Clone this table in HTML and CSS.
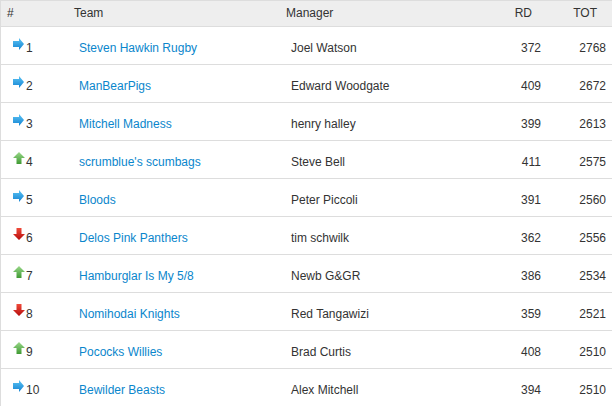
FILE: index.html
```html
<!DOCTYPE html>
<html>
<head>
<meta charset="utf-8">
<link rel="stylesheet" href="styles.css">
</head>
<body>
<svg width="0" height="0" class="defs">
  <defs>
    <linearGradient id="gb" x1="0" y1="0" x2="0" y2="1"><stop offset="0" stop-color="#5cc4f4"/><stop offset="1" stop-color="#1382d2"/></linearGradient>
    <linearGradient id="gg" x1="0" y1="0" x2="0" y2="1"><stop offset="0" stop-color="#9ad88a"/><stop offset="1" stop-color="#3f9a33"/></linearGradient>
    <linearGradient id="gr" x1="0" y1="0" x2="0" y2="1"><stop offset="0" stop-color="#f04a3a"/><stop offset="1" stop-color="#b50d0d"/></linearGradient>
    <symbol id="same" viewBox="0 0 11 12"><polygon points="0,3 6,3 6,0 11,6 6,12 6,9 0,9" fill="url(#gb)"/></symbol>
    <symbol id="up" viewBox="0 0 12 12"><polygon points="6,0 12,6 8.5,6 8.5,12 3.5,12 3.5,6 0,6" fill="url(#gg)"/></symbol>
    <symbol id="down" viewBox="0 0 12 12"><polygon points="3.5,0 8.5,0 8.5,6 12,6 6,12 0,6 3.5,6" fill="url(#gr)"/></symbol>
  </defs>
</svg>
<div class="wrap">
<table class="ladder">
  <colgroup>
    <col class="c-rank"><col class="c-team"><col class="c-mgr"><col class="c-rd"><col class="c-tot">
  </colgroup>
  <thead>
    <tr><th class="h-rank">#</th><th>Team</th><th>Manager</th><th class="num">RD</th><th class="num">TOT</th></tr>
  </thead>
  <tbody>
    <tr><td class="rank"><svg class="ico w11"><use href="#same"/></svg>1</td><td><a href="#">Steven Hawkin Rugby</a></td><td>Joel Watson</td><td class="num">372</td><td class="num">2768</td></tr>
    <tr><td class="rank"><svg class="ico w11"><use href="#same"/></svg>2</td><td><a href="#">ManBearPigs</a></td><td>Edward Woodgate</td><td class="num">409</td><td class="num">2672</td></tr>
    <tr><td class="rank"><svg class="ico w11"><use href="#same"/></svg>3</td><td><a href="#">Mitchell Madness</a></td><td>henry halley</td><td class="num">399</td><td class="num">2613</td></tr>
    <tr><td class="rank"><svg class="ico"><use href="#up"/></svg>4</td><td><a href="#">scrumblue's scumbags</a></td><td>Steve Bell</td><td class="num">411</td><td class="num">2575</td></tr>
    <tr><td class="rank"><svg class="ico w11"><use href="#same"/></svg>5</td><td><a href="#">Bloods</a></td><td>Peter Piccoli</td><td class="num">391</td><td class="num">2560</td></tr>
    <tr><td class="rank"><svg class="ico"><use href="#down"/></svg>6</td><td><a href="#">Delos Pink Panthers</a></td><td>tim schwilk</td><td class="num">362</td><td class="num">2556</td></tr>
    <tr><td class="rank"><svg class="ico"><use href="#up"/></svg>7</td><td><a href="#">Hamburglar Is My 5/8</a></td><td>Newb G&amp;GR</td><td class="num">386</td><td class="num">2534</td></tr>
    <tr><td class="rank"><svg class="ico"><use href="#down"/></svg>8</td><td><a href="#">Nomihodai Knights</a></td><td>Red Tangawizi</td><td class="num">359</td><td class="num">2521</td></tr>
    <tr><td class="rank"><svg class="ico"><use href="#up"/></svg>9</td><td><a href="#">Pococks Willies</a></td><td>Brad Curtis</td><td class="num">408</td><td class="num">2510</td></tr>
    <tr><td class="rank"><svg class="ico w11"><use href="#same"/></svg>10</td><td><a href="#">Bewilder Beasts</a></td><td>Alex Mitchell</td><td class="num">394</td><td class="num">2510</td></tr>
  </tbody>
</table>
</div>
</body>
</html>
```
FILE: styles.css
```css
html, body {
  margin: 0;
  padding: 0;
  background: #ffffff;
  overflow: hidden;
}
body {
  font-family: "Liberation Sans", Arial, sans-serif;
  font-size: 12px;
  color: #333333;
}
.defs {
  position: absolute;
  width: 0;
  height: 0;
}
.wrap {
  border-top: 1px solid #dddddd;
  border-left: 1px solid #dddddd;
}
.ladder {
  width: 611px;
  border-collapse: collapse;
  table-layout: fixed;
}
.c-rank { width: 66px; }
.c-team { width: 212px; }
.c-mgr { width: 200px; }
.c-rd { width: 68px; }
.c-tot { width: 65px; }
.ladder th {
  background: #eeeeee;
  font-weight: normal;
  text-align: left;
  color: #333333;
  height: 25px;
  line-height: 25px;
  padding: 0 0 0 7px;
  border-bottom: 1px solid #dddddd;
}
.ladder th.h-rank { padding-left: 6px; }
.ladder th.num {
  text-align: right;
  padding-right: 15px;
}
.ladder td {
  height: 14px;
  line-height: 14px;
  padding: 14px 6px 9px 12px;
  border-bottom: 1px solid #dddddd;
  white-space: nowrap;
  vertical-align: top;
}
.ladder td.rank {
  padding-top: 11px;
  padding-bottom: 0;
}
.ladder td.num { text-align: right; }
.ladder a {
  color: #0a86cc;
  text-decoration: none;
}
.ico {
  width: 12px;
  height: 12px;
  vertical-align: 2px;
  margin-right: 1px;
}
.ico.w11 { width: 11px; margin-right: 2px; }
```
